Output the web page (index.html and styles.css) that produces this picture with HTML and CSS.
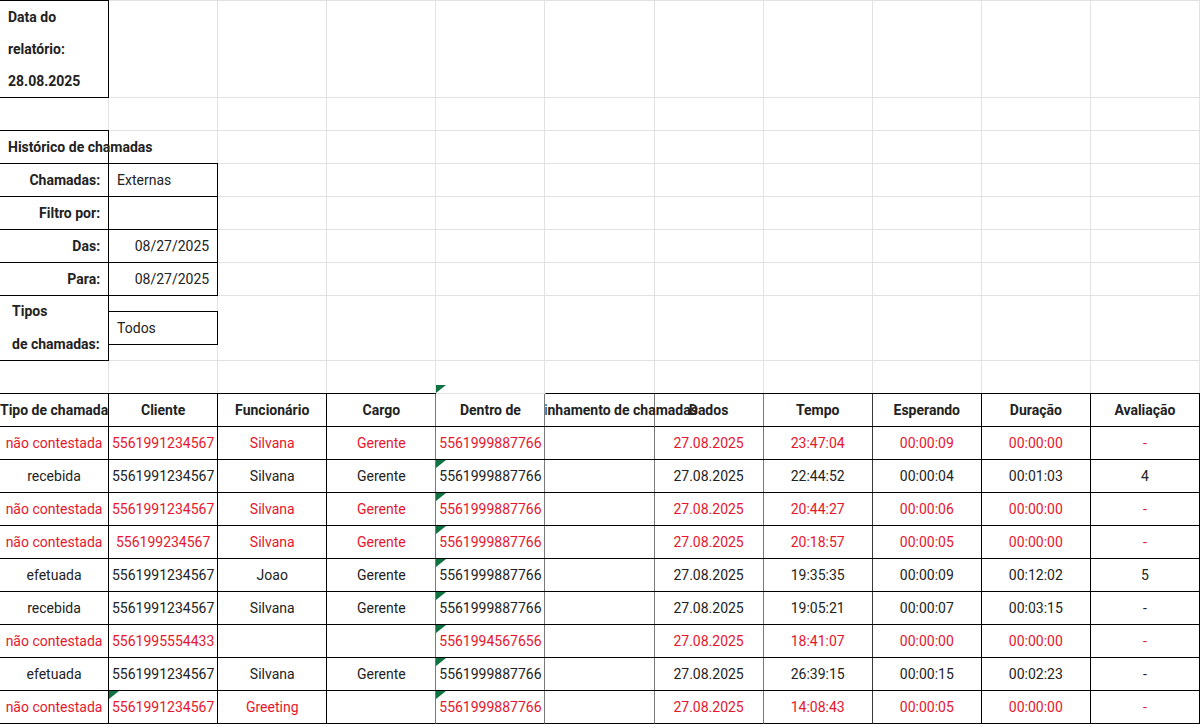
FILE: index.html
```html
<!DOCTYPE html>
<html lang="pt">
<head>
<meta charset="utf-8">
<title>Histórico de chamadas</title>
<link rel="stylesheet" href="styles.css">
</head>
<body>
<div class="sheet">
  <div class="row">
    <div class="c b bold l stack"><div>Data do<br>relatório:<br>28.08.2025</div></div>
    <div class="c"></div><div class="c"></div><div class="c"></div><div class="c"></div><div class="c"></div>
    <div class="c"></div><div class="c"></div><div class="c"></div><div class="c"></div><div class="c"></div>
  </div>
  <div class="row">
    <div class="c"></div><div class="c"></div><div class="c"></div><div class="c"></div><div class="c"></div><div class="c"></div>
    <div class="c"></div><div class="c"></div><div class="c"></div><div class="c"></div><div class="c"></div>
  </div>
  <div class="row">
    <div class="c b bold l">Histórico de chamadas</div>
    <div class="c"></div><div class="c"></div><div class="c"></div><div class="c"></div><div class="c"></div>
    <div class="c"></div><div class="c"></div><div class="c"></div><div class="c"></div><div class="c"></div>
  </div>
  <div class="row">
    <div class="c b bold r">Chamadas:</div>
    <div class="c b l">Externas</div>
    <div class="c"></div><div class="c"></div><div class="c"></div><div class="c"></div><div class="c"></div>
    <div class="c"></div><div class="c"></div><div class="c"></div><div class="c"></div>
  </div>
  <div class="row">
    <div class="c b bold r">Filtro por:</div>
    <div class="c b l"></div>
    <div class="c"></div><div class="c"></div><div class="c"></div><div class="c"></div><div class="c"></div>
    <div class="c"></div><div class="c"></div><div class="c"></div><div class="c"></div>
  </div>
  <div class="row">
    <div class="c b bold r">Das:</div>
    <div class="c b r">08/27/2025</div>
    <div class="c"></div><div class="c"></div><div class="c"></div><div class="c"></div><div class="c"></div>
    <div class="c"></div><div class="c"></div><div class="c"></div><div class="c"></div>
  </div>
  <div class="row">
    <div class="c b bold r">Para:</div>
    <div class="c b r">08/27/2025</div>
    <div class="c"></div><div class="c"></div><div class="c"></div><div class="c"></div><div class="c"></div>
    <div class="c"></div><div class="c"></div><div class="c"></div><div class="c"></div>
  </div>
  <div class="row">
    <div class="c b bold l tipos"><div>Tipos<br>de chamadas:</div></div>
    <div class="c box-holder"><div class="inbox">Todos</div></div>
    <div class="c"></div><div class="c"></div><div class="c"></div><div class="c"></div><div class="c"></div>
    <div class="c"></div><div class="c"></div><div class="c"></div><div class="c"></div>
  </div>
  <div class="row">
    <div class="c"></div><div class="c"></div><div class="c"></div><div class="c"></div>
    <div class="c tri-bottom"></div>
    <div class="c"></div><div class="c"></div><div class="c"></div><div class="c"></div><div class="c"></div><div class="c"></div>
  </div>

  <div class="trow head">
    <div class="c">Tipo de chamada</div>
    <div class="c">Cliente</div>
    <div class="c">Funcionário</div>
    <div class="c">Cargo</div>
    <div class="c">Dentro de</div>
    <div class="c fwd"><span>Encaminhamento de chamadas</span></div>
    <div class="c">Dados</div>
    <div class="c">Tempo</div>
    <div class="c">Esperando</div>
    <div class="c">Duração</div>
    <div class="c">Avaliação</div>
  </div>

  <div class="trow red">
    <div class="c">não contestada</div><div class="c">5561991234567</div><div class="c">Silvana</div><div class="c">Gerente</div>
    <div class="c">5561999887766</div><div class="c"></div><div class="c">27.08.2025</div><div class="c">23:47:04</div>
    <div class="c">00:00:09</div><div class="c">00:00:00</div><div class="c">-</div>
  </div>
  <div class="trow">
    <div class="c">recebida</div><div class="c">5561991234567</div><div class="c">Silvana</div><div class="c">Gerente</div>
    <div class="c tri">5561999887766</div><div class="c"></div><div class="c">27.08.2025</div><div class="c">22:44:52</div>
    <div class="c">00:00:04</div><div class="c">00:01:03</div><div class="c">4</div>
  </div>
  <div class="trow red">
    <div class="c">não contestada</div><div class="c">5561991234567</div><div class="c">Silvana</div><div class="c">Gerente</div>
    <div class="c tri">5561999887766</div><div class="c"></div><div class="c">27.08.2025</div><div class="c">20:44:27</div>
    <div class="c">00:00:06</div><div class="c">00:00:00</div><div class="c">-</div>
  </div>
  <div class="trow red">
    <div class="c">não contestada</div><div class="c">556199234567</div><div class="c">Silvana</div><div class="c">Gerente</div>
    <div class="c tri">5561999887766</div><div class="c"></div><div class="c">27.08.2025</div><div class="c">20:18:57</div>
    <div class="c">00:00:05</div><div class="c">00:00:00</div><div class="c">-</div>
  </div>
  <div class="trow">
    <div class="c">efetuada</div><div class="c">5561991234567</div><div class="c">Joao</div><div class="c">Gerente</div>
    <div class="c tri">5561999887766</div><div class="c"></div><div class="c">27.08.2025</div><div class="c">19:35:35</div>
    <div class="c">00:00:09</div><div class="c">00:12:02</div><div class="c">5</div>
  </div>
  <div class="trow">
    <div class="c">recebida</div><div class="c">5561991234567</div><div class="c">Silvana</div><div class="c">Gerente</div>
    <div class="c tri">5561999887766</div><div class="c"></div><div class="c">27.08.2025</div><div class="c">19:05:21</div>
    <div class="c">00:00:07</div><div class="c">00:03:15</div><div class="c">-</div>
  </div>
  <div class="trow red">
    <div class="c">não contestada</div><div class="c">5561995554433</div><div class="c"></div><div class="c"></div>
    <div class="c tri">5561994567656</div><div class="c"></div><div class="c">27.08.2025</div><div class="c">18:41:07</div>
    <div class="c">00:00:00</div><div class="c">00:00:00</div><div class="c">-</div>
  </div>
  <div class="trow">
    <div class="c">efetuada</div><div class="c">5561991234567</div><div class="c">Silvana</div><div class="c">Gerente</div>
    <div class="c tri">5561999887766</div><div class="c"></div><div class="c">27.08.2025</div><div class="c">26:39:15</div>
    <div class="c">00:00:15</div><div class="c">00:02:23</div><div class="c">-</div>
  </div>
  <div class="trow red">
    <div class="c">não contestada</div><div class="c tri">5561991234567</div><div class="c">Greeting</div><div class="c"></div>
    <div class="c tri">5561999887766</div><div class="c"></div><div class="c">27.08.2025</div><div class="c">14:08:43</div>
    <div class="c">00:00:05</div><div class="c">00:00:00</div><div class="c">-</div>
  </div>
</div>
</body>
</html>
```

FILE: styles.css
```css
html, body {
  margin: 0;
  padding: 0;
  background: #ffffff;
}

body {
  font-family: Roboto, "Liberation Sans", Arial, sans-serif;
  font-size: 14px;
  color: #222222;
  overflow: hidden;
}

.sheet {
  width: 1200px;
  display: grid;
  grid-template-columns: repeat(11, minmax(0, 1fr));
  grid-template-rows: 97px repeat(6, 33px) 65px 33px 33px repeat(9, 33px);
  border-top: 1px solid #e2e2e2;
}

.row,
.trow {
  display: contents;
}

.c {
  box-sizing: border-box;
  min-width: 0;
  border-right: 1px solid #e2e2e2;
  border-bottom: 1px solid #e2e2e2;
  display: flex;
  align-items: center;
  justify-content: center;
  padding: 0 8px;
  white-space: nowrap;
}

/* black bordered cell */
.b {
  border-right-color: #000;
  border-bottom-color: #000;
  box-shadow: -1px -1px 0 #000, 0 -1px 0 #000;
}

.bold {
  font-weight: 700;
}

.l {
  justify-content: flex-start;
}

.r {
  justify-content: flex-end;
}

.stack {
  white-space: normal;
  line-height: 32px;
}

.tipos {
  white-space: nowrap;
  line-height: 33px;
  padding-left: 12px;
}

.box-holder {
  padding: 0;
  align-items: center;
}

.inbox {
  box-sizing: border-box;
  flex: 1;
  height: 34px;
  margin-right: -1px;
  border-top: 1px solid #000;
  border-bottom: 1px solid #000;
  border-right: 1px solid #000;
  display: flex;
  align-items: center;
  padding-left: 8px;
}

/* call table */
.trow > .c {
  border-right-color: #000;
  border-bottom-color: #000;
  box-shadow: 0 -1px 0 #000;
}

.trow > .c:nth-child(n+4):nth-child(-n+7) {
  border-right-color: #7a7a7a;
}

.trow > .c:nth-child(8) {
  border-right-color: #3a3a3a;
}

.head > .c {
  font-weight: 700;
}

.fwd {
  clip-path: inset(-2px -300px 0 0);
}

.red {
  color: #e6162d;
}

/* green corner markers */
.tri,
.tri-bottom {
  position: relative;
}

.tri::before,
.tri-bottom::before {
  content: "";
  position: absolute;
  left: 0;
  width: 0;
  height: 0;
  border-top: 8px solid #0f7240;
  border-right: 10px solid transparent;
}

.tri::before {
  top: 0;
}

.tri-bottom::before {
  bottom: 0;
}
```
